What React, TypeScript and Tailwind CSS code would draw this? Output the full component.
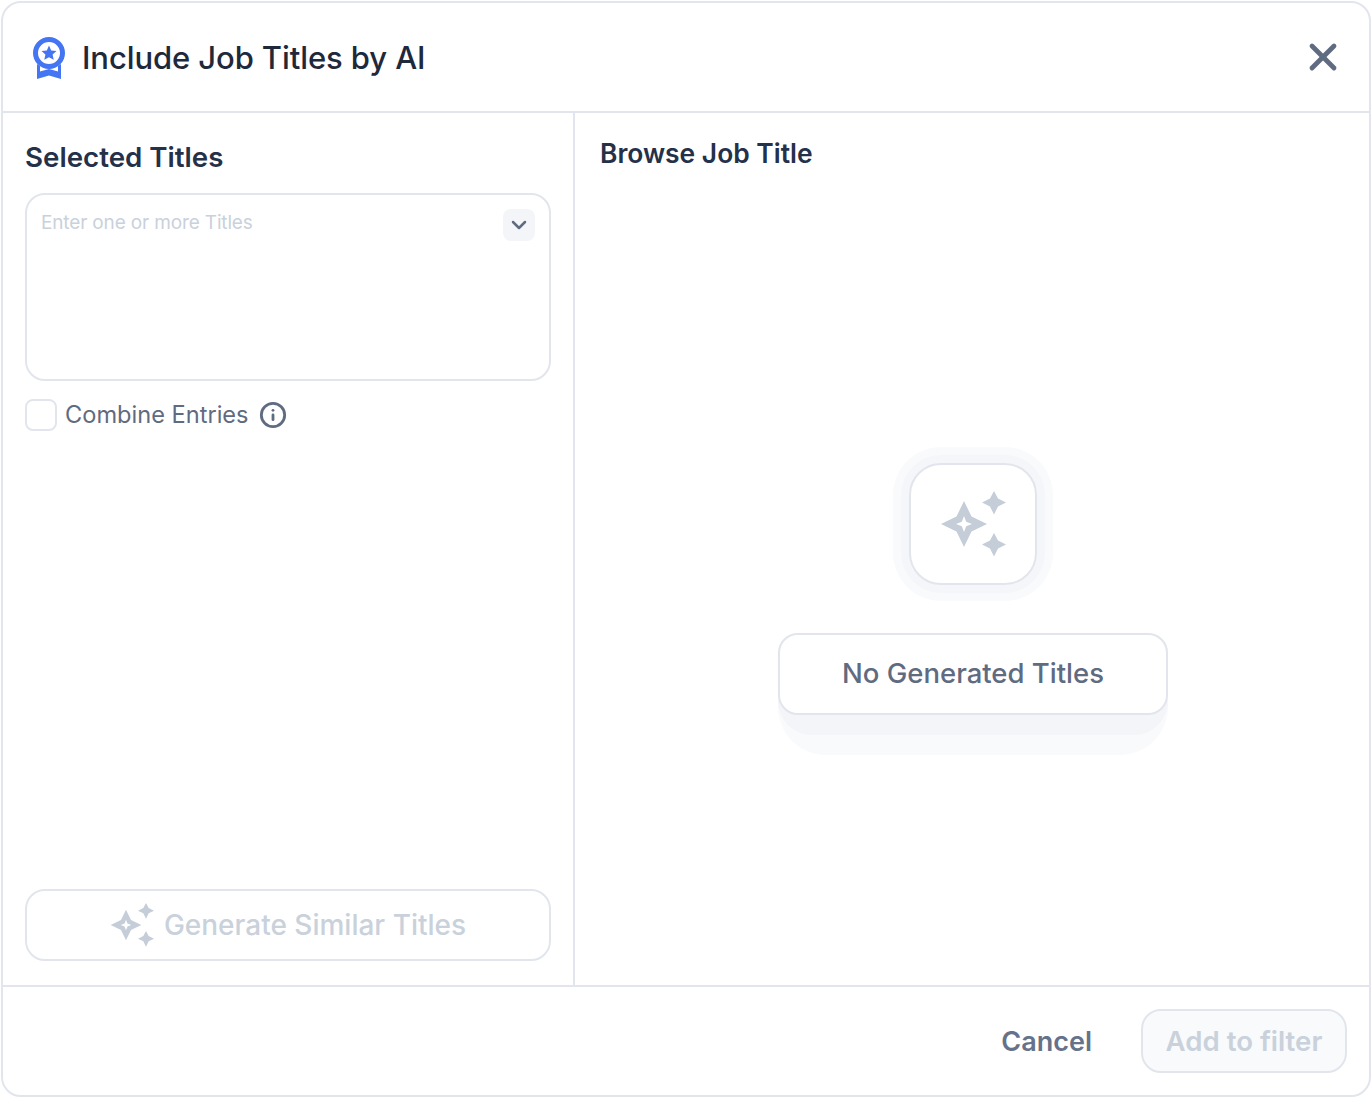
import { X, ChevronDown, Info } from 'lucide-react';

const Sparkles = ({ className }: { className?: string }) => (
  <svg viewBox="0 0 66 66" className={className} fill="#c4cdd8">
    <path
      fillRule="evenodd"
      d="M24 10 L31.500 25.500 L47 33 L31.500 40.500 L24 56 L16.500 40.500 L1 33 L16.500 25.500 Z M24 25 L21.800 30.800 L16 33 L21.800 35.200 L24 41 L26.200 35.200 L32 33 L26.200 30.800 Z"
    />
    <path d="M54 0 L58 7.500 L66 11.500 L58 15.500 L54 23.500 L50 15.500 L42 11.500 L50 7.500 Z" />
    <path d="M54 42 L58 49.500 L66 53.500 L58 57.500 L54 65.500 L50 57.500 L42 53.500 L50 49.500 Z" />
  </svg>
);

const Medal = () => (
  <svg viewBox="0 0 32 42" className="mt-[2px] h-[42px] w-8">
    <circle cx="16" cy="16" r="13.500" fill="none" stroke="#4475f2" strokeWidth="5" />
    <path
      d="M16 8.500 L18.200 13.400 L23.500 14 L19.600 17.600 L20.700 22.800 L16 20.200 L11.300 22.800 L12.400 17.600 L8.500 14 L13.800 13.400 Z"
      fill="#4475f2"
    />
    <path d="M4 27 L7 29 L7 34.500 L16 32 L25 34.500 L25 29 L28 27 L28 42 L16 38.500 L4 42 Z" fill="#4475f2" />
  </svg>
);

export default function App() {
  return (
    <div className="h-[1097px] w-[1371px] pl-px pt-px">
      <div className="flex h-full flex-col overflow-hidden rounded-[20px] border-2 border-[#e2e6ec] bg-white font-['Inter',sans-serif]">
        <div className="flex h-[110px] shrink-0 items-center justify-between border-b-2 border-[#e2e6ec] pl-[30px] pr-6">
          <div className="flex items-center gap-[17px]">
            <Medal />
            <h1 className="text-[31px] font-medium leading-none tracking-[-0.1px] text-[#1e293b]">Include Job Titles by AI</h1>
          </div>
          <X className="h-[44px] w-[44px] text-[#5f6b80]" strokeWidth={2.6} />
        </div>

        <div className="flex min-h-0 flex-1">
          <div className="flex w-[572px] shrink-0 flex-col border-r-2 border-[#e2e6ec] px-[22px] pb-6 pt-[26px]">
            <h2 className="text-[27.700px] font-semibold leading-9 text-[#253149]">Selected Titles</h2>
            <div className="mt-[18px] flex h-[188px] items-start justify-between rounded-[20px] border-2 border-[#e2e6ec] pl-[14px] pr-[14px] pt-[14px]">
              <span className="text-[19px] leading-7 tracking-[-0.15px] text-[#c9d1db]">Enter one or more Titles</span>
              <span className="flex h-8 w-8 items-center justify-center rounded-lg bg-[#f4f5f8]">
                <ChevronDown className="h-6 w-6 text-[#5f6b80]" strokeWidth={2.5} />
              </span>
            </div>
            <div className="mt-[18px] flex items-center">
              <span className="h-8 w-8 rounded-lg border-2 border-[#e2e6ec]" />
              <span className="ml-2 text-[23.600px] leading-8 text-[#5f6b80]">Combine Entries</span>
              <Info className="ml-[10px] h-7 w-7 text-[#5f6b80]" strokeWidth={2.4} />
            </div>
            <div className="mt-auto flex h-[72px] items-center justify-center gap-[10px] rounded-[20px] border-2 border-[#e2e6ec]">
              <Sparkles className="h-11 w-11" />
              <span className="text-[28px] font-medium leading-9 text-[#c9d1db]">Generate Similar Titles</span>
            </div>
          </div>

          <div className="flex flex-1 flex-col pl-[25px] pr-[23px] pt-[22px]">
            <h2 className="text-[26.400px] font-semibold leading-9 text-[#253149]">Browse Job Title</h2>
            <div className="mt-[276px] flex flex-col items-center">
              <div className="rounded-[48px] bg-[#f9fafc] p-[8px]">
                <div className="rounded-[40px] bg-[#f5f6f9] p-[8px]">
                  <div className="flex h-[122px] w-[128px] items-center justify-center rounded-[32px] border-2 border-[#e2e6ec] bg-white">
                    <Sparkles className="h-[66px] w-[66px]" />
                  </div>
                </div>
              </div>
              <div className="mt-8 rounded-t-[20px] rounded-b-[48px] bg-[#f9fafc] pb-5">
                <div className="rounded-t-[20px] rounded-b-[34px] bg-[#f4f5f8] pb-5">
                  <div className="flex h-[82px] w-[390px] items-center justify-center rounded-[20px] border-2 border-[#e2e6ec] bg-white pb-[2px]">
                    <span className="text-[27.500px] font-medium leading-9 text-[#5f6b80]">No Generated Titles</span>
                  </div>
                </div>
              </div>
            </div>
          </div>
        </div>

        <div className="flex h-[110px] shrink-0 items-center justify-end gap-[49px] border-t-2 border-[#e2e6ec] pr-[22px]">
          <span className="pt-[2px] text-[27px] font-semibold leading-9 text-[#66728a]">Cancel</span>
          <div className="flex h-16 w-[206px] items-center justify-center rounded-[20px] border-2 border-[#e2e6ec] bg-[#f9fafc]">
            <span className="text-[27.600px] font-semibold leading-9 text-[#c9d1db]">Add to filter</span>
          </div>
        </div>
      </div>
    </div>
  );
}
